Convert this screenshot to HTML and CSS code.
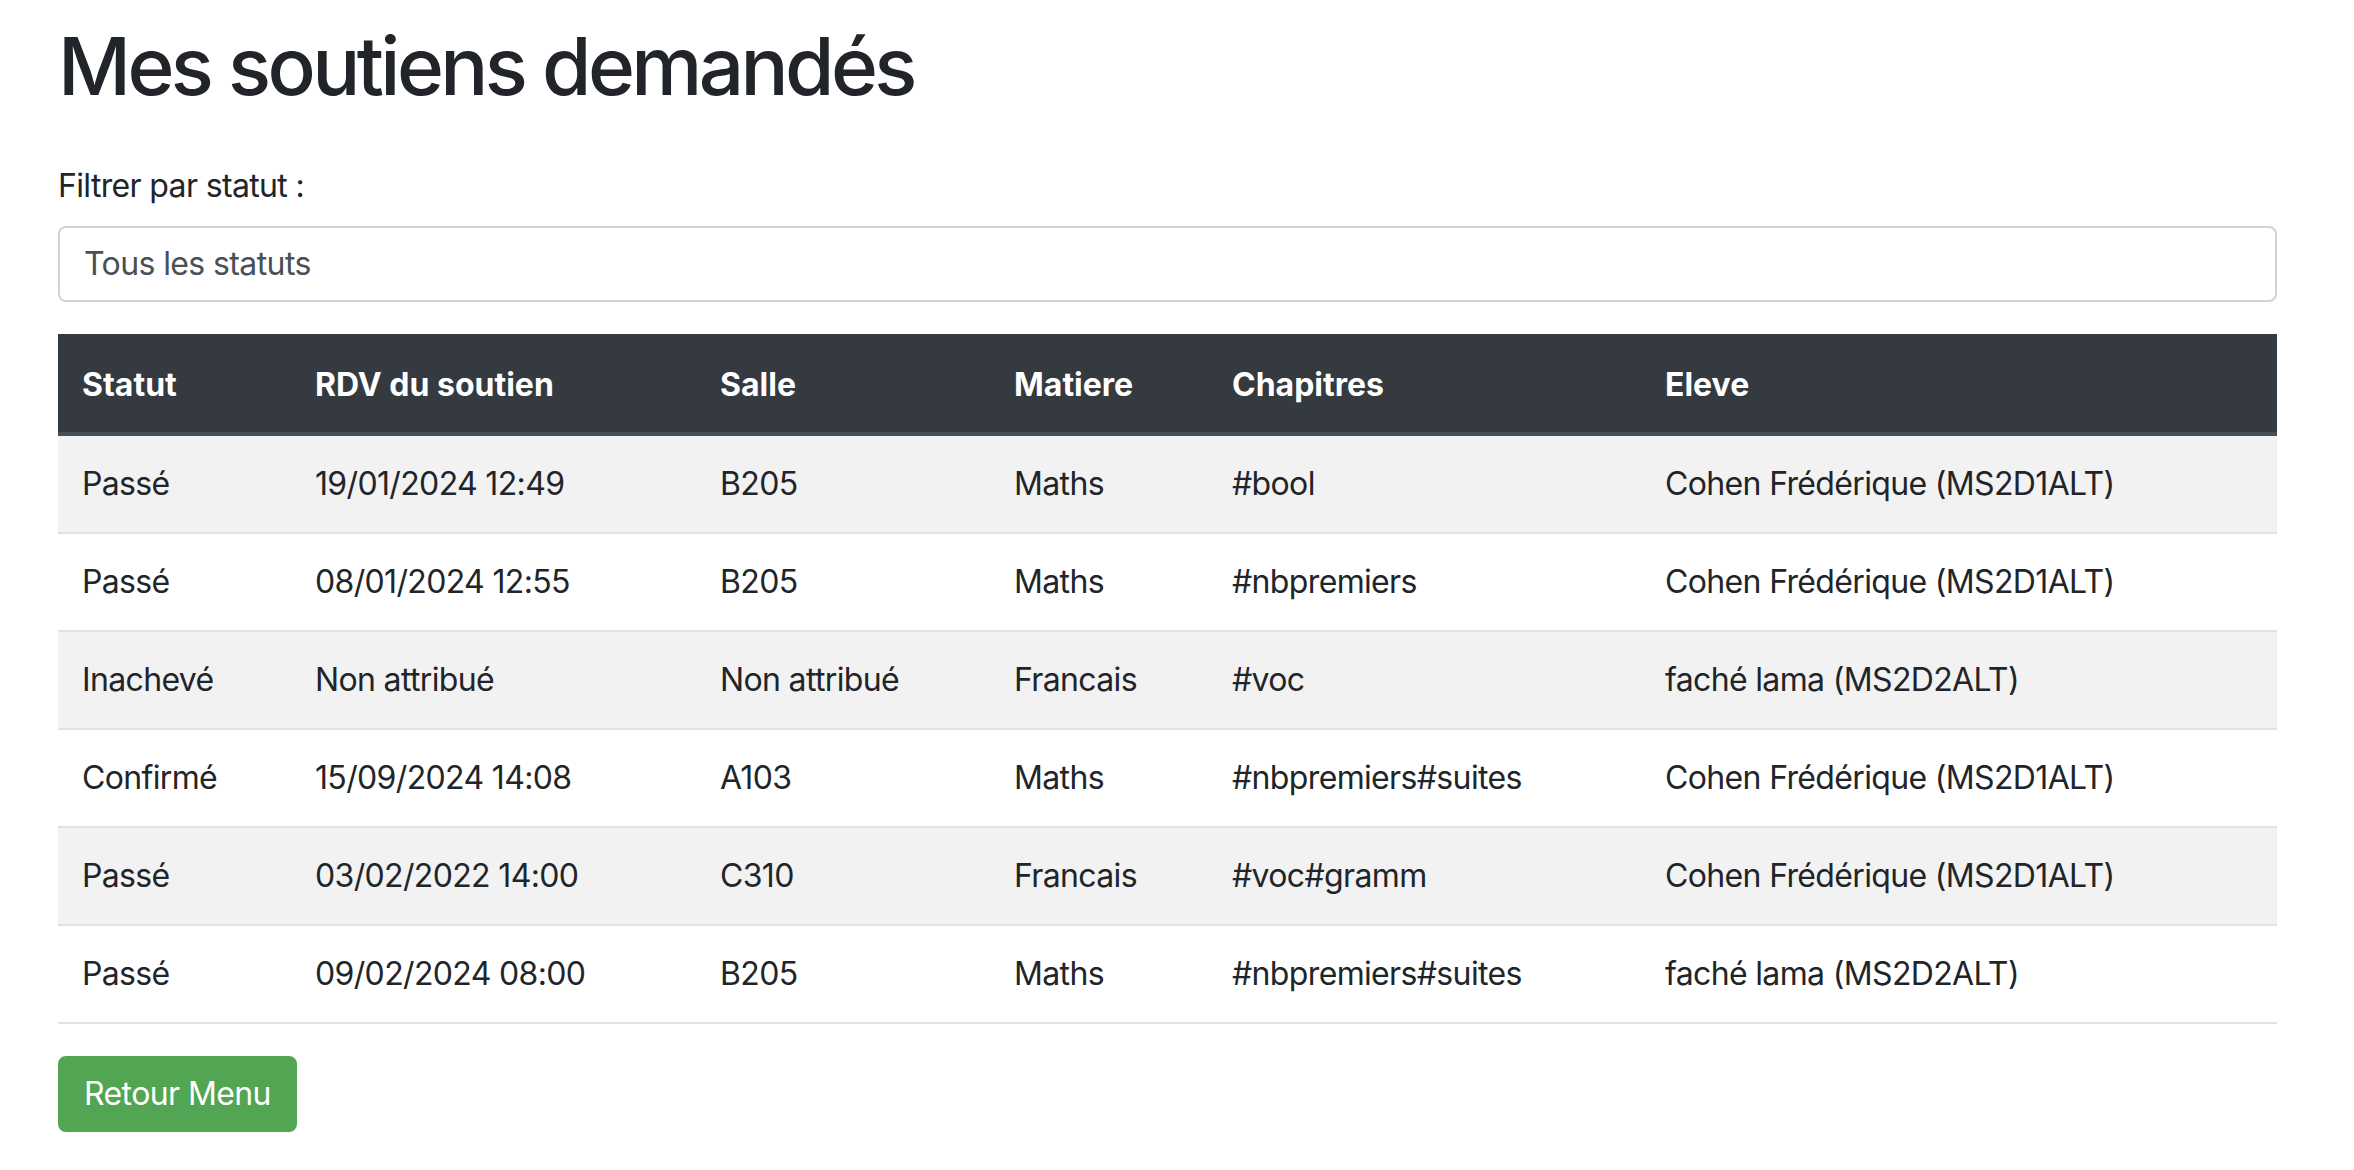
FILE: index.html
```html
<!DOCTYPE html>
<html lang="fr">
<head>
<meta charset="utf-8">
<title>Mes soutiens demandés</title>
<link rel="stylesheet" href="styles.css">
</head>
<body>
<div class="container">
  <h1 class="title">Mes soutiens demandés</h1>
  <div class="form-group">
    <label class="label" for="statut">Filtrer par statut :</label>
    <select id="statut" class="form-control">
      <option>Tous les statuts</option>
    </select>
  </div>
  <table class="table">
    <colgroup>
      <col class="c1"><col class="c2"><col class="c3"><col class="c4"><col class="c5"><col class="c6">
    </colgroup>
    <thead>
      <tr><th>Statut</th><th>RDV du soutien</th><th>Salle</th><th>Matiere</th><th>Chapitres</th><th>Eleve</th></tr>
    </thead>
    <tbody>
      <tr><td>Passé</td><td>19/01/2024 12:49</td><td>B205</td><td>Maths</td><td>#bool</td><td>Cohen Frédérique (MS2D1ALT)</td></tr>
      <tr><td>Passé</td><td>08/01/2024 12:55</td><td>B205</td><td>Maths</td><td>#nbpremiers</td><td>Cohen Frédérique (MS2D1ALT)</td></tr>
      <tr><td>Inachevé</td><td>Non attribué</td><td>Non attribué</td><td>Francais</td><td>#voc</td><td>faché lama (MS2D2ALT)</td></tr>
      <tr><td>Confirmé</td><td>15/09/2024 14:08</td><td>A103</td><td>Maths</td><td>#nbpremiers#suites</td><td>Cohen Frédérique (MS2D1ALT)</td></tr>
      <tr><td>Passé</td><td>03/02/2022 14:00</td><td>C310</td><td>Francais</td><td>#voc#gramm</td><td>Cohen Frédérique (MS2D1ALT)</td></tr>
      <tr><td>Passé</td><td>09/02/2024 08:00</td><td>B205</td><td>Maths</td><td>#nbpremiers#suites</td><td>faché lama (MS2D2ALT)</td></tr>
    </tbody>
  </table>
  <a class="btn-success" href="#">Retour Menu</a>
</div>
</body>
</html>
```
FILE: styles.css
```css
html, body {
  margin: 0;
  padding: 0;
  background: #fff;
}
body {
  font-family: Inter, "Liberation Sans", sans-serif;
  font-size: 32px;
  line-height: 48px;
  letter-spacing: -0.65px;
  color: #212529;
}
.container {
  width: 2219px;
  margin-left: 58px;
  padding-top: 18px;
}
.title {
  margin: 0 0 48px 0;
  font-size: 80px;
  font-weight: 500;
  line-height: 96px;
  letter-spacing: -3.6px;
  color: #212529;
}
.form-group {
  margin-bottom: 32px;
}
.label {
  display: block;
  margin-bottom: 16px;
}
.form-control {
  display: block;
  width: 100%;
  height: 76px;
  box-sizing: border-box;
  padding: 12px 24px;
  font-family: inherit;
  font-size: 32px;
  line-height: 48px;
  letter-spacing: -0.6px;
  color: #495057;
  background: #fff;
  border: 2px solid #ced4da;
  border-radius: 8px;
  appearance: none;
  -webkit-appearance: none;
}
.table {
  width: 100%;
  border-collapse: collapse;
  table-layout: fixed;
  margin-bottom: 32px;
}
.c1 { width: 233px; }
.c2 { width: 405px; }
.c3 { width: 294px; }
.c4 { width: 218px; }
.c5 { width: 433px; }
.c6 { width: 636px; }
.table th {
  background: #343a40;
  color: #fff;
  font-weight: 700;
  letter-spacing: 0;
  text-align: left;
  padding: 27px 24px 23px 24px;
  border-bottom: 4px solid #454d55;
}
.table td {
  padding: 24px;
  border-bottom: 2px solid #dee2e6;
  white-space: nowrap;
}
.table tbody tr:nth-child(odd) td {
  background: #f2f2f2;
}
.btn-success {
  display: inline-block;
  padding: 12px 24px;
  border: 2px solid #52a552;
  border-radius: 8px;
  background: #52a552;
  color: #fff;
  text-decoration: none;
  font-size: 32px;
  line-height: 48px;
  letter-spacing: -0.6px;
}
```
